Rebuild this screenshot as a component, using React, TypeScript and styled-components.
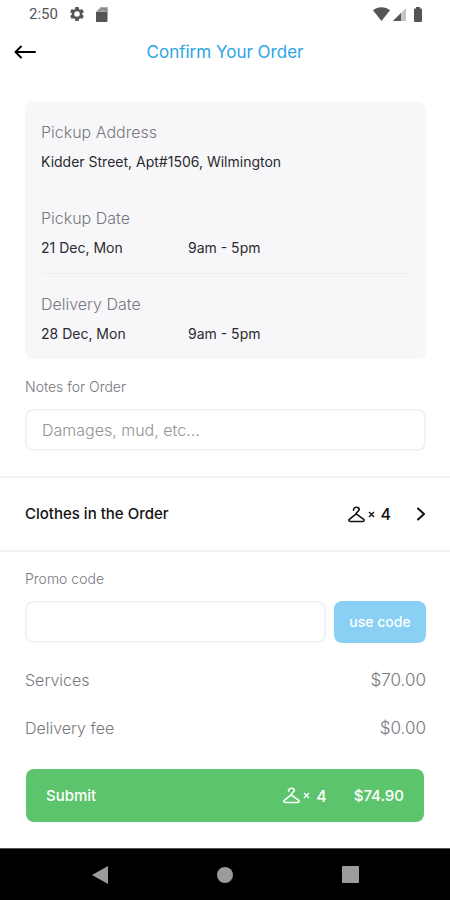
import React from "react";
import styled, { createGlobalStyle } from "styled-components";

const GlobalStyle = createGlobalStyle`
  *, *::before, *::after { box-sizing: border-box; }
  body { margin: 0; background: #fff; }
  button, input { font: inherit; color: inherit; }
  button { border: 0; padding: 0; background: none; cursor: pointer; }
  h1, h2, p, dl, dt, dd { margin: 0; font: inherit; }
  svg { display: block; }
`;

const Page = styled.div`
  min-height: 100vh;
  display: flex;
  flex-direction: column;
  background: #fff;
  color: #2b2b2e;
  font-family: Inter, "Liberation Sans", sans-serif;
  font-size: 16px;
  line-height: 20px;
`;

const StatusBar = styled.div`
  display: flex;
  align-items: center;
  justify-content: space-between;
  height: 28px;
  padding: 0 24px 0 29px;
  color: #555;
  font-family: Roboto, sans-serif;
  font-size: 15px;
`;

const StatusGroup = styled.div<{ $gap: number }>`
  display: flex;
  align-items: center;
  gap: ${(p) => p.$gap}px;
`;

const Header = styled.header`
  display: grid;
  grid-template-columns: 24px 1fr 24px;
  align-items: center;
  height: 48px;
  padding: 0 13px;
`;

const Title = styled.h1`
  text-align: center;
  color: #2ba6e4;
  font-size: 17px;
`;

const Main = styled.main`
  flex: 1;
`;

const Block = styled.section<{ $top: number; $bottom: number }>`
  padding: ${(p) => p.$top}px 24px ${(p) => p.$bottom}px 25px;
`;

const Card = styled.dl`
  padding: 0 16px;
  border-radius: 8px;
  background: #f7f7fa;
`;

const Detail = styled.div<{ $line?: string }>`
  padding: 20px 0 15px;
  border-bottom: ${(p) => (p.$line ? `1px solid ${p.$line}` : "0")};
`;

const DetailLabel = styled.dt`
  margin-bottom: 10px;
  color: #77777e;
  font-weight: 300;
`;

const DetailValue = styled.dd`
  display: grid;
  grid-template-columns: 147px 1fr;
  font-size: 14px;
`;

const AddressValue = styled.dd`
  font-size: 14px;
`;

const NotesField = styled.div`
  padding-top: 18px;
`;

const FieldLabel = styled.label`
  display: block;
  margin-bottom: 12px;
  color: #77777e;
  font-size: 14px;
  font-weight: 300;
`;

const TextField = styled.input`
  display: block;
  width: 100%;
  min-width: 0;
  height: 42px;
  padding: 0 15px;
  border: 2px solid #f2f2f3;
  border-radius: 8px;
  background: #fff;
  outline: none;
  font-weight: 300;
  &::placeholder { color: #939398; opacity: 1; }
`;

const ClothesRow = styled.button`
  display: flex;
  align-items: center;
  width: 100%;
  height: 76px;
  padding: 0 23px 0 25px;
  border-top: 2px solid #f3f3f4;
  border-bottom: 2px solid #f3f3f4;
  color: #111;
  font-size: 15px;
  font-weight: 500;
`;

const Grow = styled.span`
  flex: 1;
  text-align: left;
`;

const Count = styled.span<{ $end: number }>`
  display: flex;
  align-items: center;
  gap: 3px;
  margin-right: ${(p) => p.$end}px;
`;

const Quantity = styled.span`
  margin-left: 3px;
  font-size: 16px;
`;

const PromoRow = styled.div`
  display: flex;
  gap: 8px;
`;

const UseCode = styled.button`
  flex: 0 0 92px;
  height: 42px;
  border-radius: 8px;
  background: #8acff4;
  color: #fff;
  font-size: 14px;
  font-weight: 500;
`;

const Totals = styled.dl`
  display: grid;
  gap: 28px;
  padding-top: 27px;
  color: #77777e;
  font-weight: 300;
`;

const TotalLine = styled.div`
  display: flex;
  justify-content: space-between;
`;

const Amount = styled.dd`
  font-size: 17px;
`;

const Submit = styled.button`
  display: flex;
  align-items: center;
  width: calc(100% - 52px);
  height: 53px;
  margin: 0 26px;
  padding: 0 20px;
  border-radius: 8px;
  background: #5cc46c;
  color: #fff;
  font-size: 15px;
  font-weight: 500;
`;

const NavBar = styled.nav`
  display: grid;
  grid-template-columns: repeat(3, 125px);
  justify-content: center;
  height: 52px;
  border-top: 1px solid #555;
  background: #000;
`;

const NavButton = styled.button`
  display: grid;
  place-items: center;
`;

const Hanger = () => (
  <svg width="17" height="17" viewBox="0 0 17 17" fill="none" stroke="currentColor" strokeWidth="1.6" strokeLinecap="round" strokeLinejoin="round" aria-hidden="true">
    <path d="M5.500 4.200C5.500 2.300 6.700 1.200 8.400 1.200c1.700 0 2.800 1 2.800 2.400 0 2-3.300 2-3 4.300l7.200 5.200c1.200.9.8 2.400-.6 2.400H2.200c-1.400 0-1.800-1.500-.6-2.400L8.200 7.900" />
  </svg>
);

const Times = () => (
  <svg width="7" height="7" viewBox="0 0 7 7" stroke="currentColor" strokeWidth="1.4" aria-hidden="true">
    <path d="M1 1l5 5M6 1L1 6" />
  </svg>
);

const ClothesCount = ({ end }: { end: number }) => (
  <Count $end={end}>
    <Hanger />
    <Times />
    <Quantity>4</Quantity>
  </Count>
);

const dates = [
  { label: "Pickup Date", day: "21 Dec, Mon", time: "9am - 5pm", line: "#eeeef1" },
  { label: "Delivery Date", day: "28 Dec, Mon", time: "9am - 5pm" },
];

const totals = [
  { label: "Services", amount: "$70.00" },
  { label: "Delivery fee", amount: "$0.00" },
];

export default function App() {
  return (
    <Page>
      <GlobalStyle />
      <StatusBar>
        <StatusGroup $gap={12}>
          <span>2:50</span>
          <svg width="14" height="14" viewBox="2 2 20 20" fill="#555" aria-hidden="true">
            <path fillRule="evenodd" d="M19.430 12.980c.04-.32.07-.64.07-.98s-.03-.66-.07-.98l2.110-1.650c.19-.15.24-.42.12-.64l-2-3.460c-.12-.22-.39-.3-.61-.22l-2.490 1c-.52-.4-1.080-.73-1.690-.98l-.38-2.650A.49.49 0 0014 2h-4c-.25 0-.46.18-.49.42l-.38 2.650c-.61.25-1.170.59-1.690.98l-2.490-1c-.23-.09-.49 0-.61.22l-2 3.460c-.13.22-.07.49.12.64l2.110 1.650c-.04.32-.07.65-.07.98s.03.66.07.98l-2.110 1.650c-.19.15-.24.42-.12.64l2 3.460c.12.22.39.3.61.22l2.490-1c.52.4 1.080.73 1.690.98l.38 2.650c.03.24.24.42.49.42h4c.25 0 .46-.18.49-.42l.38-2.650c.61-.25 1.170-.59 1.690-.98l2.490 1c.23.09.49 0 .61-.22l2-3.460c.12-.22.07-.49-.12-.64zM12 16a4 4 0 110-8 4 4 0 010 8z" />
          </svg>
          <svg width="12" height="15" viewBox="0 0 12 15" aria-hidden="true">
            <path d="M4.500 0H11a1 1 0 011 1v13a1 1 0 01-1 1H1a1 1 0 01-1-1V4.500z" fill="#aaa" />
            <path d="M0 5h11v9a1 1 0 01-1 1H1a1 1 0 01-1-1z" fill="#555" />
            <path d="M3 4.500L5.500 2H10v2.500" stroke="#666" fill="none" />
          </svg>
        </StatusGroup>
        <StatusGroup $gap={3}>
          <svg width="17" height="14" viewBox="0 0 17 14" fill="#555" aria-hidden="true">
            <path d="M0 3.200C4.800-.9 12.200-.9 17 3.200L8.500 14z" />
          </svg>
          <svg width="13" height="13" viewBox="0 0 13 13" aria-hidden="true">
            <path d="M13 0v13H0z" fill="#c4c4c4" />
            <path d="M8 5v8H0z" fill="#555" />
          </svg>
          <svg width="17" height="15" viewBox="0 0 17 15" fill="#555" aria-hidden="true">
            <path d="M7 0h4v1.500h1a1 1 0 011 1V14a1 1 0 01-1 1H6a1 1 0 01-1-1V2.500a1 1 0 011-1h1z" />
          </svg>
        </StatusGroup>
      </StatusBar>

      <Header>
        <button type="button" aria-label="Back">
          <svg width="24" height="16" viewBox="0 0 24 16" fill="none" stroke="#000" strokeWidth="2" strokeLinecap="round" strokeLinejoin="round" aria-hidden="true">
            <path d="M22 8H3M8 2.500L2.500 8 8 13.500" />
          </svg>
        </button>
        <Title>Confirm Your Order</Title>
      </Header>

      <Main>
        <Block $top={26} $bottom={25}>
          <Card>
            <Detail $line="#f5f5f8">
              <DetailLabel>Pickup Address</DetailLabel>
              <AddressValue>Kidder Street, Apt#1506, Wilmington</AddressValue>
            </Detail>
            {dates.map((d) => (
              <Detail key={d.label} $line={d.line}>
                <DetailLabel>{d.label}</DetailLabel>
                <DetailValue>
                  <span>{d.day}</span>
                  <span>{d.time}</span>
                </DetailValue>
              </Detail>
            ))}
          </Card>
          <NotesField>
            <FieldLabel htmlFor="notes">Notes for Order</FieldLabel>
            <TextField id="notes" type="text" placeholder="Damages, mud, etc..." />
          </NotesField>
        </Block>

        <ClothesRow type="button">
          <Grow>Clothes in the Order</Grow>
          <ClothesCount end={24} />
          <svg width="12" height="16" viewBox="0 0 12 16" fill="none" stroke="currentColor" strokeWidth="2" strokeLinecap="round" strokeLinejoin="round" aria-hidden="true">
            <path d="M3 2.500L9 8l-6 5.500" />
          </svg>
        </ClothesRow>

        <Block $top={17} $bottom={31}>
          <FieldLabel htmlFor="promo">Promo code</FieldLabel>
          <PromoRow>
            <TextField id="promo" type="text" />
            <UseCode type="button">use code</UseCode>
          </PromoRow>
          <Totals>
            {totals.map((t) => (
              <TotalLine key={t.label}>
                <dt>{t.label}</dt>
                <Amount>{t.amount}</Amount>
              </TotalLine>
            ))}
          </Totals>
        </Block>

        <Submit type="button">
          <Grow>Submit</Grow>
          <ClothesCount end={27} />
          <span>$74.90</span>
        </Submit>
      </Main>

      <NavBar aria-label="System navigation">
        <NavButton type="button" aria-label="Back">
          <svg width="16" height="18" viewBox="0 0 16 18" fill="#9c9c9c" aria-hidden="true"><path d="M16 0v18L0 9z" /></svg>
        </NavButton>
        <NavButton type="button" aria-label="Home">
          <svg width="16" height="16" viewBox="0 0 16 16" fill="#9c9c9c" aria-hidden="true"><circle cx="8" cy="8" r="8" /></svg>
        </NavButton>
        <NavButton type="button" aria-label="Recent apps">
          <svg width="17" height="17" viewBox="0 0 17 17" fill="#9c9c9c" aria-hidden="true"><rect width="17" height="17" rx="1" /></svg>
        </NavButton>
      </NavBar>
    </Page>
  );
}
